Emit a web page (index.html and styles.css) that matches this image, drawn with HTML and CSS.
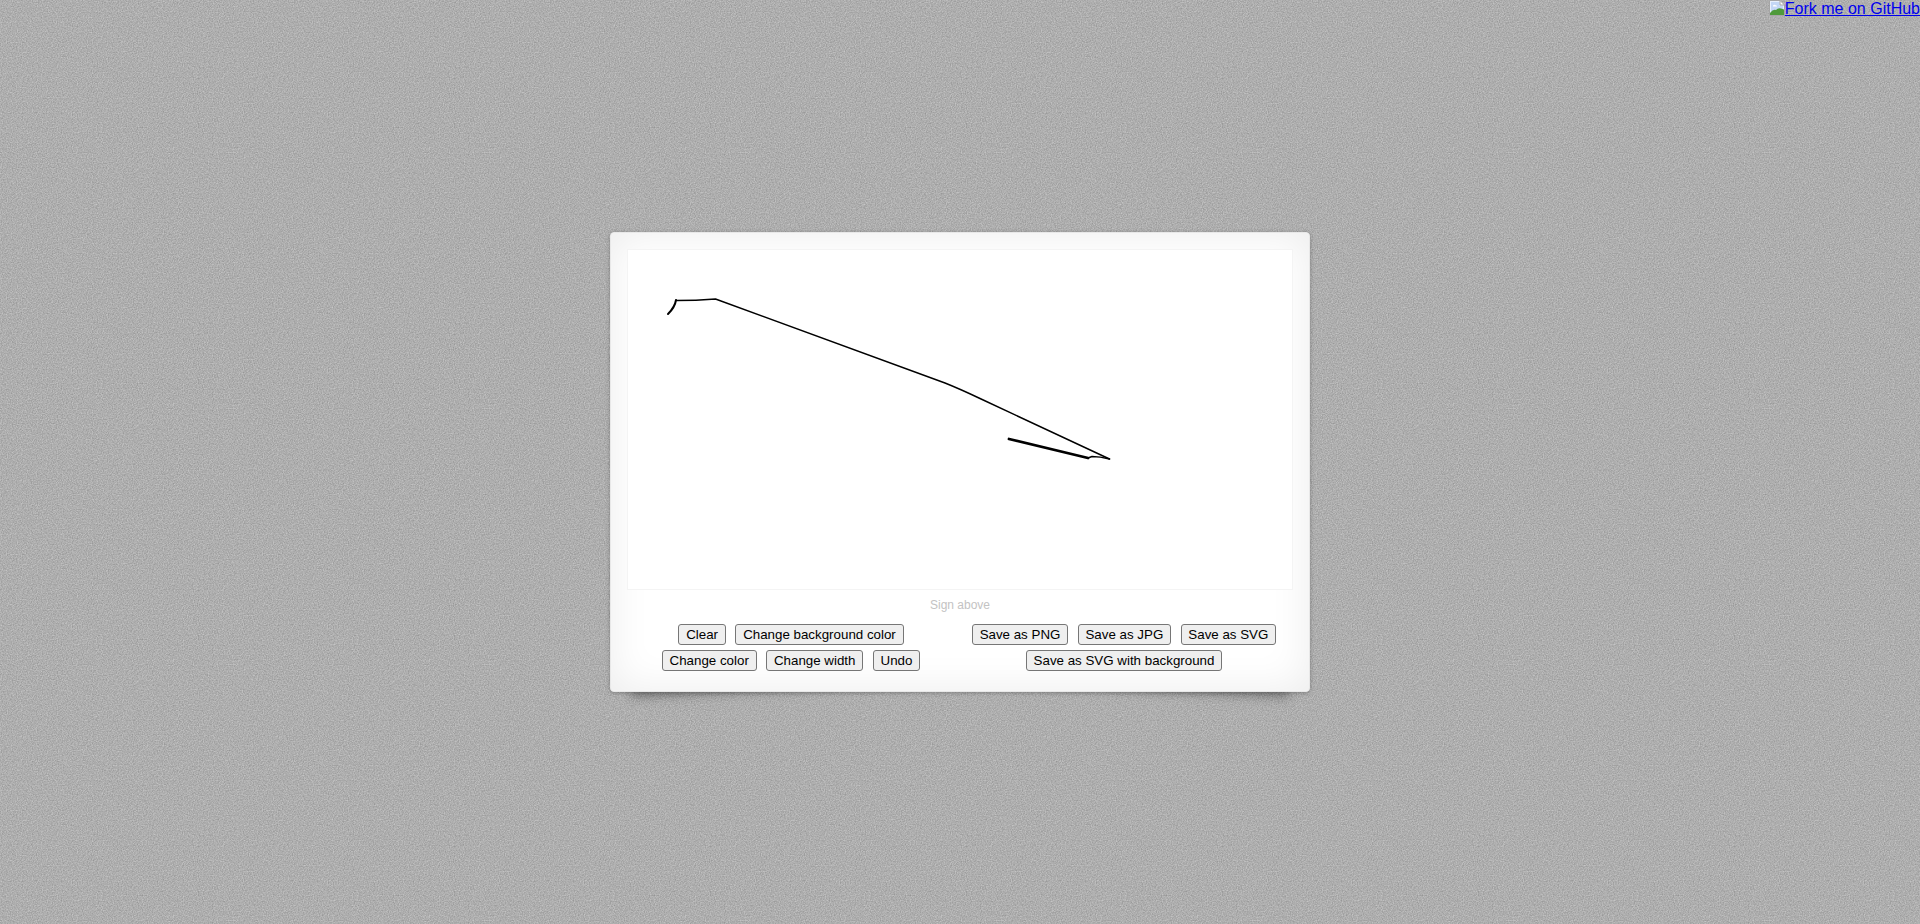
FILE: index.html
```html
<!DOCTYPE html>
<html lang="en">
<head>
<meta charset="utf-8">
<title>Signature Pad</title>
<link rel="stylesheet" href="styles.css">
</head>
<body>
<a class="ribbon" href="#"><svg class="broken" width="16" height="16" viewBox="0 0 16 16" aria-hidden="true"><path d="M0.5 0.5H11L15.5 5V15.5H0.5Z" fill="#e8effa" stroke="#a5a5a5"/><path d="M2 2H10.5V5.5H14V9L2 12Z" fill="#c4d7f5"/><path d="M4 5.5Q5.5 3.8 7 5.5Q8.5 5.5 8 6.5H4Z" fill="#fff"/><path d="M1 15V13Q4 9 7 10Q9 7.500 12 8.500L15 9.500V15Z" fill="#4f9a3a"/><path d="M11 0.5V5H15.5Z" fill="#fff" stroke="#a5a5a5"/></svg>Fork me on GitHub</a>
<main class="pad">
  <div class="pad-body">
    <svg class="drawing" width="664" height="339" viewBox="628 250 664 339" aria-hidden="true">
      <path class="ink thin" d="M668 314Q675 307 676 300"/>
      <path class="ink hair" d="M676 300.500Q696 300.500 715.500 299L945 383Q960 389 980 398.500L1109.500 459"/>
      <path class="ink hair" d="M1109.500 459Q1100 456.500 1092 456.500L1088 458"/>
      <path class="ink thick" d="M1009 439L1088 458"/>
    </svg>
  </div>
  <footer class="pad-footer">
    <p class="caption">Sign above</p>
    <div class="actions">
      <div class="group">
        <div class="row"><button type="button">Clear</button><button type="button">Change background color</button></div>
        <div class="row"><button type="button">Change color</button><button type="button">Change width</button><button type="button">Undo</button></div>
      </div>
      <div class="group">
        <div class="row"><button type="button">Save as PNG</button><button type="button">Save as JPG</button><button type="button">Save as SVG</button></div>
        <div class="row"><button type="button">Save as SVG with background</button></div>
      </div>
    </div>
  </footer>
</main>
</body>
</html>
```
FILE: styles.css
```css
* { box-sizing: border-box; }
html, body { height: 100%; }
body {
  margin: 0;
  display: flex;
  align-items: center;
  justify-content: center;
  font-family: "Liberation Sans", Arial, sans-serif;
  background-color: #bdbdbd;
  background-image: url("data:image/svg+xml,%3Csvg xmlns='http://www.w3.org/2000/svg' width='256' height='256'%3E%3Cfilter id='n' color-interpolation-filters='sRGB'%3E%3CfeTurbulence type='fractalNoise' baseFrequency='.8' numOctaves='2' stitchTiles='stitch'/%3E%3CfeColorMatrix values='1 0 0 0 0 1 0 0 0 0 1 0 0 0 0 0 0 0 0 .25'/%3E%3C/filter%3E%3Crect width='256' height='256' filter='url(%23n)'/%3E%3C/svg%3E");
  overflow: hidden;
}
.ribbon {
  position: absolute;
  top: 0;
  right: 0;
  font-size: 16px;
  line-height: 18px;
  color: #0000ee;
  white-space: nowrap;
}
.broken { vertical-align: -2px; }
.pad {
  position: relative;
  width: 700px;
  height: 460px;
  padding: 17px 17px 0;
  display: flex;
  flex-direction: column;
  background: #fff;
  border: 1px solid #e8e8e8;
  border-radius: 4px;
  box-shadow: 0 1px 4px rgba(0, 0, 0, .27), inset 0 0 40px rgba(0, 0, 0, .08);
}
.pad::before, .pad::after {
  content: "";
  position: absolute;
  z-index: -1;
  bottom: 10px;
  width: 40%;
  height: 10px;
  box-shadow: 0 8px 12px rgba(0, 0, 0, .4);
}
.pad::before { left: 20px; transform: skew(-3deg) rotate(-3deg); }
.pad::after { right: 20px; transform: skew(3deg) rotate(3deg); }
.pad-body {
  width: 664px;
  height: 339px;
  flex: none;
  background: #fff;
  box-shadow: 0 0 0 1px #f4f4f4;
}
.drawing { display: block; }
.ink { fill: none; stroke: #000; stroke-linecap: round; stroke-linejoin: round; }
.hair { stroke-width: 1.5; }
.thin { stroke-width: 2; }
.thick { stroke-width: 2.800; }
.caption {
  margin: 9px 0 0;
  font-size: 12px;
  line-height: 14px;
  text-align: center;
  color: #c3c3c3;
}
.actions {
  display: flex;
  margin: 12px 0 0 -3.500px;
}
.group {
  width: 333px;
  display: flex;
  flex-direction: column;
  gap: 5px;
}
.row {
  display: flex;
  justify-content: center;
  gap: 9.500px;
}
button {
  height: 21px;
  padding: 0 6.800px;
  font-family: "Liberation Sans", Arial, sans-serif;
  font-size: 13.333px;
  color: #000;
  background: #efefef;
  border: 1px solid #767676;
  border-radius: 3px;
}
```
